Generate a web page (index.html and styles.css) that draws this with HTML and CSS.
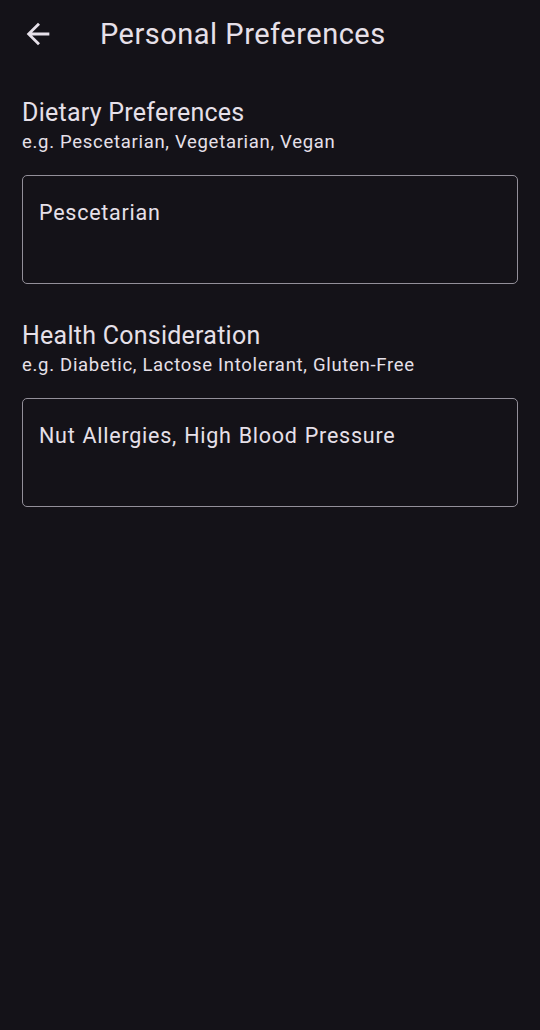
FILE: index.html
```html
<!DOCTYPE html>
<html>
<head>
<meta charset="utf-8">
<link rel="stylesheet" href="styles.css">
</head>
<body>
<header class="appbar">
  <button class="back" aria-label="Back">
    <svg width="34" height="34" viewBox="0 0 24 24"><path d="M20 11H7.83l5.59-5.59L12 4l-8 8 8 8 1.41-1.41L7.83 13H20v-2z" fill="#e6e0e9"/></svg>
  </button>
  <h1 class="title">Personal Preferences</h1>
</header>
<main class="content">
  <section class="field">
    <h2 class="label">Dietary Preferences</h2>
    <p class="hint">e.g. Pescetarian, Vegetarian, Vegan</p>
    <div class="box">Pescetarian</div>
  </section>
  <section class="field">
    <h2 class="label">Health Consideration</h2>
    <p class="hint">e.g. Diabetic, Lactose Intolerant, Gluten-Free</p>
    <div class="box">Nut Allergies, High Blood Pressure</div>
  </section>
</main>
</body>
</html>
```
FILE: styles.css
```css
html, body {
  margin: 0;
  padding: 0;
  background: #141218;
  color: #e6e0e9;
  font-family: Roboto, "Noto Sans", sans-serif;
}
body {
  width: 540px;
  height: 1030px;
}
.appbar {
  height: 68px;
  display: flex;
  align-items: center;
  padding-left: 21px;
}
.back {
  background: none;
  border: 0;
  padding: 0;
  width: 34px;
  height: 34px;
  display: flex;
  align-items: center;
  justify-content: center;
}
.title {
  margin: 0 0 0 45px;
  font-size: 29px;
  font-weight: 400;
  letter-spacing: 0.5px;
}
.content {
  padding: 29px 22px 0 22px;
  display: flex;
  flex-direction: column;
  gap: 36px;
}
.label {
  margin: 0;
  font-size: 25px;
  font-weight: 400;
  line-height: 32px;
  letter-spacing: 0.25px;
}
.hint {
  margin: 0;
  font-size: 18.5px;
  line-height: 26px;
  letter-spacing: 0.7px;
}
.box {
  margin-top: 20px;
  border: 1px solid #938f99;
  border-radius: 5px;
  box-sizing: border-box;
  height: 109px;
  padding: 24px 16px 0 16px;
  font-size: 21.5px;
  line-height: 26px;
  letter-spacing: 0.75px;
  word-spacing: 1px;
}
```
